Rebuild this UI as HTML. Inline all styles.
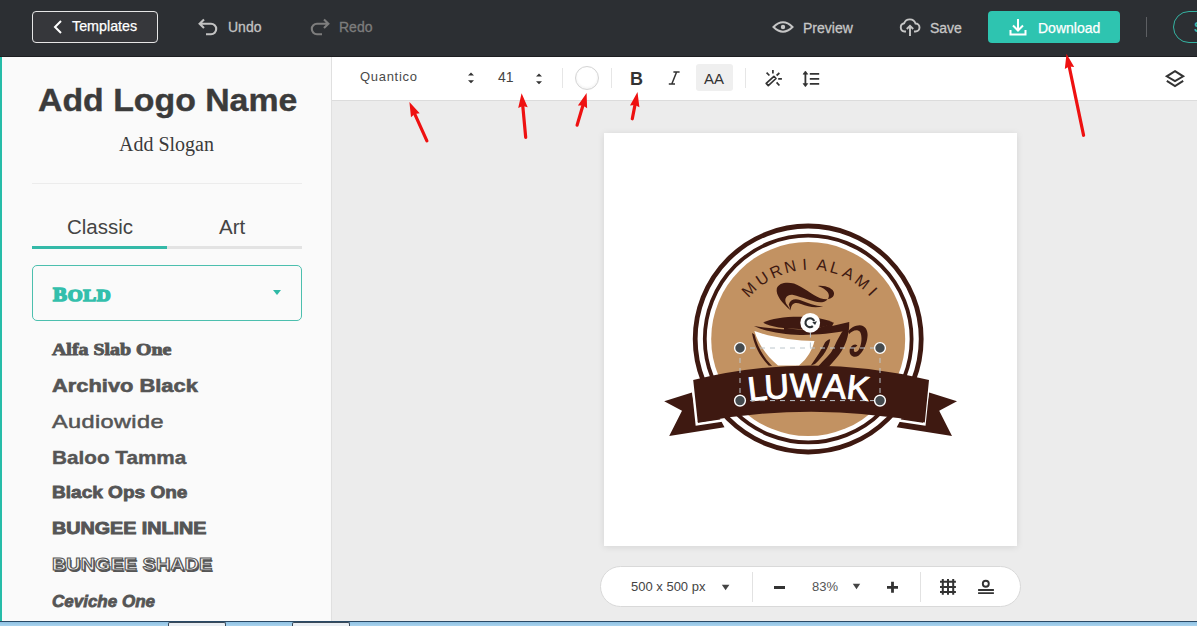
<!DOCTYPE html>
<html><head><meta charset="utf-8">
<style>
*{box-sizing:border-box;margin:0;padding:0}
html,body{width:1197px;height:626px;overflow:hidden;background:#ececec;font-family:"Liberation Sans",sans-serif;position:relative}
.abs{position:absolute}
#hdr{left:0;top:0;width:1197px;height:57px;background:#2c2f33;border-bottom:1px solid #1d1e21}
.txt{position:absolute;white-space:nowrap;line-height:1}
#tplbtn{left:32px;top:11px;width:126px;height:32px;border:1px solid #e6e6e6;border-radius:4px;background:#36373b}
#dlbtn{left:988px;top:11px;width:132px;height:32px;border-radius:4px;background:#2ec4b0}
#pill{left:1173px;top:11px;width:80px;height:32px;border:1px solid #35b3a2;border-radius:16px}
#left{left:0;top:57px;width:332px;height:564px;background:#fafafa;border-right:1px solid #e0e0e0}
#lbar{left:0;top:57px;width:2px;height:564px;background:#26bca8}
#tool{left:332px;top:57px;width:865px;height:44px;background:#fff;border-bottom:1px solid #dcdcdc}
#canvas{left:604px;top:133px;width:413px;height:413px;background:#fff;box-shadow:0 1px 7px rgba(0,0,0,.10)}
#zoom{left:600px;top:566px;width:421px;height:41px;background:#fff;border:1px solid #d9d9d9;border-radius:21px}
#task{left:0;top:621px;width:1197px;height:5px;background:linear-gradient(#2a4a66 0,#2a4a66 1px,#8fc1e3 1px,#a9d3ee 5px)}
</style></head><body>

<!-- HEADER -->
<div id="hdr" class="abs"></div>
<div id="tplbtn" class="abs"></div>
<svg class="abs" style="left:52px;top:19px" width="12" height="16" viewBox="0 0 12 16"><path d="M9 2 L3 8 L9 14" fill="none" stroke="#fff" stroke-width="2"/></svg>
<div class="txt" style="left:72px;top:19px;font-size:14.3px;color:#fff;-webkit-text-stroke:0.25px #fff">Templates</div>

<svg class="abs" style="left:197px;top:17px" width="24" height="20" viewBox="0 0 24 20"><path d="M7 2.5 L2.6 6.8 L7 11.1 M2.6 6.8 H14 A5.2 5.2 0 0 1 14 17.2 H9" fill="none" stroke="#c2c2c2" stroke-width="2.1"/></svg>
<div class="txt" style="left:228px;top:20px;font-size:14px;color:#c2c2c2;-webkit-text-stroke:0.3px #c2c2c2">Undo</div>
<svg class="abs" style="left:309px;top:17px" width="24" height="20" viewBox="0 0 24 20"><path d="M15 2.5 L19.4 6.8 L15 11.1 M19.4 6.8 H8 A5.2 5.2 0 0 0 8 17.2 H13" fill="none" stroke="#7d7d7d" stroke-width="2.1"/></svg>
<div class="txt" style="left:339px;top:20px;font-size:14px;color:#7d7d7d;-webkit-text-stroke:0.3px #7d7d7d">Redo</div>

<svg class="abs" style="left:772px;top:20px" width="22" height="14" viewBox="0 0 22 14"><path d="M1.5 7 Q11 -2.5 20.5 7 Q11 16.5 1.5 7 Z" fill="none" stroke="#c6c6c6" stroke-width="2"/><circle cx="11" cy="7" r="2.2" fill="#c6c6c6"/></svg>
<div class="txt" style="left:803px;top:21px;font-size:14px;color:#c6c6c6;-webkit-text-stroke:0.3px #c6c6c6">Preview</div>
<svg class="abs" style="left:899px;top:17px" width="22" height="20" viewBox="0 0 22 20"><path d="M7 14.5 H5.5 A4.2 4.2 0 0 1 5.2 6.2 A6 6 0 0 1 16.5 6.5 A4 4 0 0 1 16.5 14.5 H15" fill="none" stroke="#c6c6c6" stroke-width="1.9"/><path d="M11 19 V9 M7.8 12 L11 8.8 L14.2 12" fill="none" stroke="#c6c6c6" stroke-width="1.9"/></svg>
<div class="txt" style="left:930px;top:21px;font-size:14px;color:#c6c6c6;-webkit-text-stroke:0.3px #c6c6c6">Save</div>

<div id="dlbtn" class="abs"></div>
<svg class="abs" style="left:1009px;top:18px" width="18" height="18" viewBox="0 0 18 18"><path d="M9 1 V12 M4 7.5 L9 12.5 L14 7.5 M1.5 12 V16.5 H16.5 V12" fill="none" stroke="#fff" stroke-width="2"/></svg>
<div class="txt" style="left:1038px;top:21px;font-size:14px;color:#fff;-webkit-text-stroke:0.25px #fff">Download</div>
<div class="abs" style="left:1146px;top:17px;width:1px;height:20px;background:#5d5f63"></div>
<div id="pill" class="abs"></div>
<div class="txt" style="left:1194px;top:20px;font-size:14px;color:#40c8b6;-webkit-text-stroke:0.3px #40c8b6">S</div>

<!-- LEFT PANEL -->
<div id="left" class="abs"></div>
<div id="lbar" class="abs"></div>
<div class="txt" style="left:38px;top:84px;font-size:32px;font-weight:bold;color:#3b3b3b;transform:scaleX(1.057);transform-origin:0 0;-webkit-text-stroke:0.4px #3b3b3b">Add Logo Name</div>
<div class="txt" style="left:119px;top:134px;font-family:'Liberation Serif',serif;font-size:20px;color:#3b3b3b">Add Slogan</div>
<div class="abs" style="left:32px;top:183px;width:270px;height:1px;background:#ececec"></div>
<div class="txt" style="left:67px;top:217px;font-size:20.5px;color:#444">Classic</div>
<div class="txt" style="left:219px;top:217px;font-size:20.5px;color:#444">Art</div>
<div class="abs" style="left:32px;top:246px;width:135px;height:3px;background:#34b9a8"></div>
<div class="abs" style="left:167px;top:246px;width:135px;height:3px;background:#e3e3e3"></div>
<div class="abs" style="left:32px;top:265px;width:270px;height:56px;border:1px solid #4cbfae;border-radius:5px"></div>
<div class="txt" style="left:53px;top:286px;font-family:'Liberation Serif',serif;font-weight:bold;font-size:18.5px;color:#33bfac;transform:scaleX(1.13);transform-origin:0 0;-webkit-text-stroke:1.5px #33bfac;letter-spacing:0.6px">B<span style="font-size:17px">OLD</span></div>
<svg class="abs" style="left:272px;top:289px" width="10" height="7" viewBox="0 0 10 7"><path d="M1 1 H9 L5 6 Z" fill="#2fb9a6"/></svg>
<div class="txt" style="left:52px;top:341px;font-family:'Liberation Serif',serif;font-weight:bold;font-size:17px;color:#555;transform:scaleX(1.17);transform-origin:0 0;-webkit-text-stroke:0.9px #555">Alfa Slab One</div>
<div class="txt" style="left:52px;top:377px;font-weight:bold;font-size:18px;color:#555;transform:scaleX(1.215);transform-origin:0 0;-webkit-text-stroke:0.6px #555">Archivo Black</div>
<div class="txt" style="left:52px;top:413px;font-size:18.5px;color:#555;letter-spacing:0.3px;transform:scaleX(1.27);transform-origin:0 0;-webkit-text-stroke:0.5px #555">Audiowide</div>
<div class="txt" style="left:52px;top:448px;font-weight:bold;font-size:19px;color:#555;transform:scaleX(1.09);transform-origin:0 0;-webkit-text-stroke:0.4px #555">Baloo Tamma</div>
<div class="txt" style="left:52px;top:484px;font-weight:bold;font-size:17px;color:#555;transform:scaleX(1.12);transform-origin:0 0;-webkit-text-stroke:0.8px #555">Black Ops One</div>
<div class="txt" style="left:52px;top:520px;font-weight:bold;font-size:17px;color:#555;transform:scaleX(1.16);transform-origin:0 0;-webkit-text-stroke:0.9px #555">BUNGEE INLINE</div>
<div class="txt" style="left:52px;top:556px;font-weight:bold;font-size:17px;color:#f4f4f4;transform:scaleX(1.17);transform-origin:0 0;-webkit-text-stroke:1px #555;text-shadow:1px 1.5px 0 #555">BUNGEE SHADE</div>
<div class="txt" style="left:52px;top:593px;font-weight:bold;font-style:italic;font-size:17px;color:#555;-webkit-text-stroke:0.8px #555">Ceviche One</div>

<!-- TOOLBAR -->
<div id="tool" class="abs"></div>
<div class="txt" style="left:360px;top:70px;font-size:13px;color:#4a4a4a;letter-spacing:0.7px">Quantico</div>
<svg class="abs" style="left:467px;top:72px" width="8" height="12" viewBox="0 0 8 12"><path d="M1 3.6 L4 0.6 L7 3.6 Z M1 8.2 L4 11.2 L7 8.2 Z" fill="#333"/></svg>
<div class="txt" style="left:498px;top:70px;font-size:14px;color:#444">41</div>
<svg class="abs" style="left:535px;top:73px" width="8" height="12" viewBox="0 0 8 12"><path d="M1 3.6 L4 0.6 L7 3.6 Z M1 8.2 L4 11.2 L7 8.2 Z" fill="#333"/></svg>
<div class="abs" style="left:562px;top:68px;width:1px;height:20px;background:#e6e6e6"></div>
<div class="abs" style="left:575px;top:66px;width:24px;height:24px;border-radius:50%;background:radial-gradient(circle at 50% 45%,#fff 55%,#f0f0f0 80%,#d8d8d8 100%);border:1px solid #d5d5d5"></div>
<div class="abs" style="left:611px;top:68px;width:1px;height:20px;background:#e6e6e6"></div>
<div class="txt" style="left:630px;top:70px;font-size:18px;font-weight:bold;color:#333">B</div>
<svg class="abs" style="left:666px;top:68px" width="16" height="20" viewBox="666 68 16 20"><path d="M676.6 72 L671.8 84 M673.4 71.9 H679.6 M668.8 84.1 H675" stroke="#333" stroke-width="1.5"/></svg>
<div class="abs" style="left:696px;top:64px;width:37px;height:27px;border-radius:3px;background:#efefef"></div>
<div class="txt" style="left:704px;top:71px;font-size:15px;color:#333">AA</div>
<div class="abs" style="left:745px;top:68px;width:1px;height:20px;background:#e6e6e6"></div>
<svg class="abs" style="left:763px;top:68px" width="22" height="20" viewBox="763 68 22 20"><path d="M766.2 83.4 L773.9 76.4 L776 78.5 L768.3 85.6 Z" fill="#fff" stroke="#333" stroke-width="1.7" stroke-linejoin="round"/><path d="M772.9 70 V73.6 M766.6 72.6 L769.4 75.5 M776.6 75.5 L779.4 73 M778.2 78.9 H781.9 M776.6 82.4 L779.4 85.5" stroke="#333" stroke-width="1.7"/></svg>
<svg class="abs" style="left:800px;top:68px" width="22" height="22" viewBox="800 68 22 22"><path d="M805.4 72.5 V85.3" stroke="#333" stroke-width="1.8"/><path d="M803 74.2 L805.4 71 L807.8 74.2 Z M803 83.6 L805.4 86.8 L807.8 83.6 Z" fill="#333" stroke="#333" stroke-width="0.6"/><path d="M809.8 73.9 H819.2 M809.8 78.9 H819.2 M809.8 83.9 H819.2" stroke="#333" stroke-width="1.8"/></svg>
<svg class="abs" style="left:1164px;top:68px" width="22" height="22" viewBox="1164 68 22 22"><path d="M1175 71.2 L1183.2 76.3 L1175 81.2 L1166.8 76.3 Z" fill="none" stroke="#333" stroke-width="2" stroke-linejoin="miter"/><path d="M1166.8 80.9 L1175 86 L1183.2 80.9" fill="none" stroke="#333" stroke-width="2"/></svg>

<!-- CANVAS -->
<div id="canvas" class="abs"></div>
<!-- LOGO -->
<svg class="abs" style="left:0;top:0" width="1197" height="626" viewBox="0 0 1197 626" font-family="Liberation Sans, sans-serif"><circle cx="808.2" cy="339" r="113" fill="none" stroke="#3e1911" stroke-width="4.8"/>
<circle cx="808.2" cy="339" r="103.4" fill="none" stroke="#3e1911" stroke-width="3.8"/>
<circle cx="808.2" cy="339" r="97" fill="#c29262"/>
<text x="0" y="5.5" transform="translate(749.0 289.6) rotate(-45.3)" text-anchor="middle" font-size="16" fill="#3e1911">M</text>
<text x="0" y="5.5" transform="translate(762.3 278.7) rotate(-33.8)" text-anchor="middle" font-size="16" fill="#3e1911">U</text>
<text x="0" y="5.5" transform="translate(775.8 271.3) rotate(-23.5)" text-anchor="middle" font-size="16" fill="#3e1911">R</text>
<text x="0" y="5.5" transform="translate(790.1 266.5) rotate(-13.4)" text-anchor="middle" font-size="16" fill="#3e1911">N</text>
<text x="0" y="5.5" transform="translate(804.5 264.4) rotate(-3.7)" text-anchor="middle" font-size="16" fill="#3e1911">I</text>
<text x="0" y="5.5" transform="translate(822.1 265.1) rotate(8.1)" text-anchor="middle" font-size="16" fill="#3e1911">A</text>
<text x="0" y="5.5" transform="translate(834.9 267.9) rotate(16.9)" text-anchor="middle" font-size="16" fill="#3e1911">L</text>
<text x="0" y="5.5" transform="translate(848.4 273.3) rotate(26.6)" text-anchor="middle" font-size="16" fill="#3e1911">A</text>
<text x="0" y="5.5" transform="translate(862.1 281.8) rotate(37.4)" text-anchor="middle" font-size="16" fill="#3e1911">M</text>
<text x="0" y="5.5" transform="translate(872.8 291.5) rotate(47.0)" text-anchor="middle" font-size="16" fill="#3e1911">I</text>
<path d="M790.8 310.5 C782 303 775.5 295 776.8 288.5 C778.5 283 786.5 281.8 794 283.6 C803 286.8 812 295 820.3 298.2 C828 300.6 834.3 298.5 834 293 C833.6 288.5 825 285 817.9 286 C823 287.8 828.6 291 828.9 295.5 C829.1 300.5 823 302.6 820.3 302.3 C812 301.9 803 297.2 792.5 294.8 C786 294.3 782.8 300 787.7 305.8 Z" fill="#3e1911"/>
<path d="M788.8 304.5 C790 299.5 795 298 800 300 C808 303 815 306 823.2 306.4 C815 308 808 307 801 304 C795 301.8 791 303 790.7 310.2 Z" fill="#3e1911"/>
<path d="M754.4 331 C770 337 795 341 814.5 341 C812.5 349 808 358 799 365.5 L778 365.5 C766 356 758 343 754.4 331 Z" fill="#fff"/>
<path d="M752 333 C753.8 343.5 758.5 355 768.5 365.5 L772 366 C762.5 356.5 757 345 754.5 334.5 Z" fill="#3e1911"/>
<path d="M841.3 333 L849.2 322.1 C849.5 332 847 343 841.3 351.5 C838 356.5 834 361 829 366.5 L818 366.5 C824 360 828.5 356 831.6 351.5 C834 347.5 835.5 344 836.9 341 Z" fill="#3e1911"/>
<path d="M830.2 339.3 C829 347 824 356 815 364 L810.8 365.5 C816 358 821.5 350 825 342.5 C826.5 340.5 828.5 339.5 830.2 339.3 Z" fill="#3e1911"/>
<path d="M754 326 C775 329.5 800 330.6 819.3 329.1 L849.2 322.1 L846.6 330.6 C835 333.6 812 335.2 800 334.9 C785 334.5 765 331.5 754 326 Z" fill="#3e1911"/>
<path d="M763.2 322.8 C778 314.8 820 314.8 833.8 323 C820 331 778 331 763.2 322.8 Z" fill="#3e1911"/>
<path d="M784 327.5 C800 330.8 815 330.8 833.8 322.5 L830 331 C815 333 800 333 784 330.5 Z" fill="#3e1911"/>
<path d="M848 331.5 C850.5 328 855 325.2 859.7 325.2 C864.5 325.3 867.8 329.5 867.6 335 C867.4 341 865 348 861.5 352.4 C859.5 355 857.5 356.8 855 356.8 C851.5 356.8 849.6 354 849.6 351.2 C849.6 347.5 852.5 344.5 855.2 344.6 C856.3 344.7 857.2 345.2 857.3 346 C855.8 346.5 853.8 348 853.8 350 C853.8 351.8 855.3 352.6 857 351.6 C859.8 349.5 861.5 344 861.5 338.5 C861.5 333.5 860 330.5 857 330.3 C853.8 330.1 851 332 849.3 334 Z" fill="#3e1911"/>
<path d="M664.2 401.3 L692.0 392.5 L697.0 421.0 L719.5 418.0 L724.5 427.2 L669.2 436.0 L682.0 410.8 Z" fill="#3e1911"/>
<path d="M957.0 401.3 L929.2 392.5 L924.2 421.0 L901.7 418.0 L896.7 427.2 L952.0 436.0 L939.2 410.8 Z" fill="#3e1911"/>
<path d="M692.0 378.0 L696.8 424.2 L722.0 420.5" fill="none" stroke="#fff" stroke-width="2.6"/>
<path d="M929.2 378.0 L924.4 424.2 L899.2 420.5" fill="none" stroke="#fff" stroke-width="2.6"/>
<path d="M693.2 380 Q811 351 929 380 L924.8 422.5 Q811 401 697.8 422.5 Z" fill="#3e1911"/>
<text x="0" y="12" transform="translate(757.2 388.2) rotate(-7)" text-anchor="middle" font-size="34" fill="#fff" stroke="#fff" stroke-width="1">L</text>
<text x="0" y="12" transform="translate(776.7 386.3) rotate(-4)" text-anchor="middle" font-size="34" fill="#fff" stroke="#fff" stroke-width="1">U</text>
<text x="0" y="12" transform="translate(805.8 385.1) rotate(0)" text-anchor="middle" font-size="34" fill="#fff" stroke="#fff" stroke-width="1">W</text>
<text x="0" y="12" transform="translate(834.7 386) rotate(3.5)" text-anchor="middle" font-size="34" fill="#fff" stroke="#fff" stroke-width="1">A</text>
<text x="0" y="12" transform="translate(858.4 387.6) rotate(6.5)" text-anchor="middle" font-size="34" fill="#fff" stroke="#fff" stroke-width="1">K</text>
<path d="M740 348 H880 M740 400.6 H880 M740 348 V400.6 M880 348 V400.6 M810.4 332.5 V348" fill="none" stroke="#bcc6cc" stroke-width="1" stroke-dasharray="5 5"/>
<circle cx="740" cy="348" r="5.4" fill="#454b4f" stroke="#fff" stroke-width="1.4"/>
<circle cx="880" cy="348" r="5.4" fill="#454b4f" stroke="#fff" stroke-width="1.4"/>
<circle cx="740" cy="400.6" r="5.4" fill="#454b4f" stroke="#fff" stroke-width="1.4"/>
<circle cx="880" cy="400.6" r="5.4" fill="#454b4f" stroke="#fff" stroke-width="1.4"/>
<circle cx="810.2" cy="322.8" r="9.9" fill="#fff"/>
<path d="M814.17 321.01 A4.5 4.5 0 1 0 812.89 326.15" fill="none" stroke="#2c3135" stroke-width="2.1"/>
<path d="M816.94 321.22 L812.25 322.22 L815.07 324.89 Z" fill="#2c3135"/></svg>

<!-- ZOOM -->
<div id="zoom" class="abs"></div>
<div class="txt" style="left:631px;top:580px;font-size:13px;color:#444">500 x 500 px</div>
<svg class="abs" style="left:720px;top:583px" width="12" height="9" viewBox="720 583 12 9"><path d="M721.8 584.8 H729.4 L725.6 590.2 Z" fill="#444"/></svg>
<div class="abs" style="left:752px;top:572px;width:1px;height:30px;background:#e2e2e2"></div>
<div class="abs" style="left:774px;top:586px;width:11px;height:3px;background:#333"></div>
<div class="txt" style="left:812px;top:580px;font-size:13px;color:#555">83%</div>
<svg class="abs" style="left:851px;top:582px" width="12" height="9" viewBox="851 582 12 9"><path d="M852.8 583.8 H860.2 L856.5 589.2 Z" fill="#444"/></svg>
<svg class="abs" style="left:884px;top:579px" width="16" height="16" viewBox="884 579 16 16"><path d="M887 587.3 H898 M892.5 581.8 V592.8" stroke="#333" stroke-width="2.8"/></svg>
<div class="abs" style="left:920px;top:572px;width:1px;height:30px;background:#e2e2e2"></div>
<svg class="abs" style="left:936px;top:576px" width="24" height="22" viewBox="936 576 24 22"><path d="M942.8 579 V594.8 M948 579 V594.8 M953.2 579 V594.8 M940 581.7 H955.9 M940 587 H955.9 M940 592.1 H955.9" stroke="#333" stroke-width="2"/></svg>
<svg class="abs" style="left:975px;top:577px" width="22" height="20" viewBox="975 577 22 20"><circle cx="985.8" cy="583.8" r="3" fill="none" stroke="#333" stroke-width="1.9"/><path d="M978.1 590 H993.9 M978.1 593.2 H993.9" stroke="#333" stroke-width="1.8"/></svg>

<div id="task" class="abs"></div>
<div class="abs" style="left:168px;top:622px;width:58px;height:4px;background:#e9eef3;border:1px solid #3a4a5a;border-bottom:0;border-radius:2px 2px 0 0"></div>
<div class="abs" style="left:292px;top:622px;width:58px;height:4px;background:#e9eef3;border:1px solid #3a4a5a;border-bottom:0;border-radius:2px 2px 0 0"></div>
<!-- ARROWS -->
<svg class="abs" style="left:0;top:0" width="1197" height="626" viewBox="0 0 1197 626"><path d="M409.4 102.0 L411.0 117.2 L414.7 113.9 L419.7 113.3 Z" fill="#ee1111"/><path d="M414.7 113.9 L426.9 140.9" stroke="#ee1111" stroke-width="3.2" stroke-linecap="round"/><path d="M521.6 93.2 L518.2 108.1 L522.8 106.1 L527.7 107.2 Z" fill="#ee1111"/><path d="M522.8 106.1 L525.7 137.4" stroke="#ee1111" stroke-width="3.2" stroke-linecap="round"/><path d="M586.6 93.0 L577.9 105.5 L582.9 105.5 L587.1 108.3 Z" fill="#ee1111"/><path d="M582.9 105.5 L577.1 125.1" stroke="#ee1111" stroke-width="3.2" stroke-linecap="round"/><path d="M637.5 92.1 L630.0 105.4 L635.0 104.9 L639.4 107.3 Z" fill="#ee1111"/><path d="M635.0 104.9 L632.3 118.8" stroke="#ee1111" stroke-width="3.2" stroke-linecap="round"/><path d="M1066.5 53.8 L1064.8 69.0 L1069.2 66.5 L1074.2 67.0 Z" fill="#ee1111"/><path d="M1069.2 66.5 L1083.6 135.3" stroke="#ee1111" stroke-width="3.2" stroke-linecap="round"/></svg>
</body></html>
